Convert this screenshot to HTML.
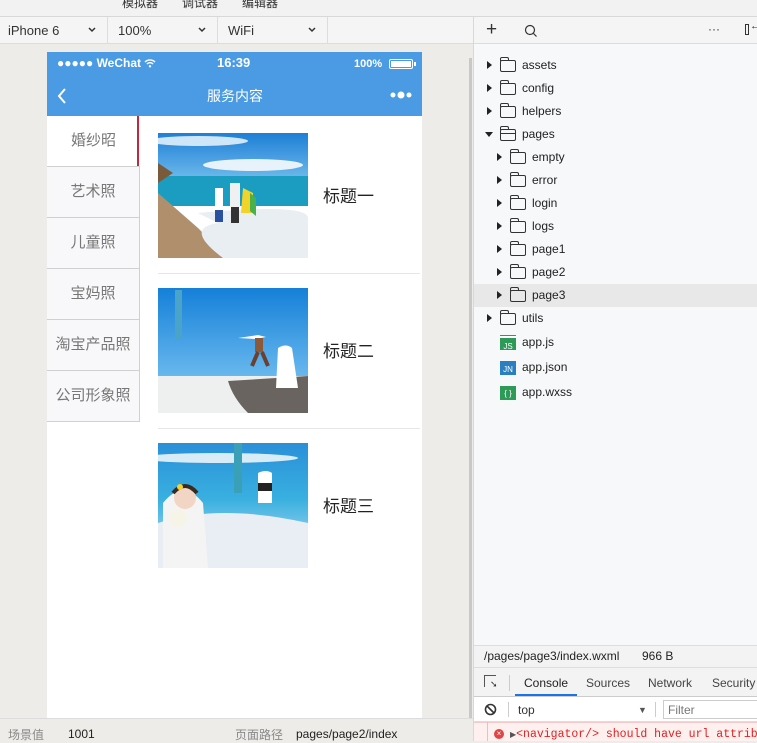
<!DOCTYPE html>
<html><head><meta charset="utf-8"><style>
*{margin:0;padding:0;box-sizing:border-box}
body{width:757px;height:741px;overflow:hidden;background:#eeece9;font-family:"Liberation Sans","Noto Sans CJK SC",sans-serif;position:relative;font-size:12px;color:#333}
.abs{position:absolute}
.cj{font-family:"Liberation Sans","Noto Sans CJK SC",sans-serif}
.tri{width:0;height:0;border-top:4px solid transparent;border-bottom:4px solid transparent;border-left:5px solid #222;position:absolute}
.trid{width:0;height:0;border-left:4px solid transparent;border-right:4px solid transparent;border-top:5px solid #222;position:absolute}
.fold{position:absolute;width:16px;height:12px;border:1.2px solid #333;border-radius:2px}
.fold:before{content:"";position:absolute;left:-1px;top:-4px;width:7px;height:3px;border:1.2px solid #333;border-bottom:none;border-radius:2px 2px 0 0}
.ft{position:absolute;font-size:12px;color:#222}
.side{position:absolute;left:47px;width:93px;height:51px;background:#f8f7f9;border-bottom:1px solid #d0d0d0;border-right:1px solid #d0d0d0;font-size:15px;color:#777;text-align:center;line-height:50px}
</style></head><body>
<div class="abs" style="left:0;top:0;width:757px;height:17px;background:#f2f2f2;border-bottom:1px solid #d8d8d8"></div>
<div class="abs cj" style="left:122px;top:-6px;font-size:12px;color:#333">模拟器</div>
<div class="abs cj" style="left:182px;top:-6px;font-size:12px;color:#333">调试器</div>
<div class="abs cj" style="left:242px;top:-6px;font-size:12px;color:#333">编辑器</div>
<div class="abs" style="left:0;top:17px;width:473px;height:27px;background:#f5f5f5;border-bottom:1px solid #dcdcdc"></div>
<div class="abs" style="left:107px;top:17px;width:1px;height:27px;background:#ddd"></div>
<div class="abs" style="left:217px;top:17px;width:1px;height:27px;background:#ddd"></div>
<div class="abs" style="left:327px;top:17px;width:1px;height:27px;background:#ddd"></div>
<div class="abs" style="left:8px;top:23px;font-size:13px">iPhone 6</div>
<div class="abs" style="left:118px;top:23px;font-size:13px">100%</div>
<div class="abs" style="left:228px;top:23px;font-size:13px">WiFi</div>
<svg class="abs" style="left:88px;top:27px" width="8" height="6"><path d="M1 1l3 3 3-3" stroke="#333" stroke-width="1.5" fill="none"/></svg>
<svg class="abs" style="left:198px;top:27px" width="8" height="6"><path d="M1 1l3 3 3-3" stroke="#333" stroke-width="1.5" fill="none"/></svg>
<svg class="abs" style="left:308px;top:27px" width="8" height="6"><path d="M1 1l3 3 3-3" stroke="#333" stroke-width="1.5" fill="none"/></svg>
<div class="abs" style="left:473px;top:17px;width:1px;height:724px;background:#d8d8d8"></div>
<div class="abs" style="left:469px;top:58px;width:3px;height:660px;background:#c8c8c8"></div>
<div class="abs" style="left:47px;top:52px;width:375px;height:666px;background:#fff"></div>
<div class="abs" style="left:47px;top:52px;width:375px;height:64px;background:#4a9be3"></div>
<div class="abs" style="left:57px;top:56px;color:#fff;font-size:12px;font-weight:bold">●●●●● WeChat</div>
<svg class="abs" style="left:144px;top:58px" width="12" height="10"><path d="M1 4a7 7 0 0110 0M3 6a4 4 0 016 0" stroke="#fff" stroke-width="1.4" fill="none"/><circle cx="6" cy="8.3" r="1.2" fill="#fff"/></svg>
<div class="abs" style="left:217px;top:55px;color:#fff;font-size:13px;font-weight:bold">16:39</div>
<div class="abs" style="left:354px;top:58px;color:#fff;font-size:11px;font-weight:bold">100%</div>
<div class="abs" style="left:389px;top:59px;width:24px;height:10px;border:1.3px solid #fff;border-radius:2px;padding:1px"><div style="width:100%;height:100%;background:#fff"></div></div>
<div class="abs" style="left:414px;top:62px;width:2px;height:4px;background:#fff"></div>
<svg class="abs" style="left:57px;top:87px" width="10" height="18"><path d="M8 2L2 9l6 7" stroke="#fff" stroke-width="2" fill="none"/></svg>
<div class="abs cj" style="left:207px;top:86px;color:#fff;font-size:14px">服务内容</div>
<svg class="abs" style="left:389px;top:90px" width="24" height="10"><circle cx="4" cy="5" r="2.5" fill="#fff"/><circle cx="12" cy="5" r="3.5" fill="#fff"/><circle cx="20" cy="5" r="2.5" fill="#fff"/></svg>
<div class="side cj" style="top:116px;background:#fff;border-right:none">婚纱昭</div>
<div class="abs" style="left:137px;top:116px;width:2px;height:50px;background:#c4283a"></div>
<div class="side cj" style="top:167px">艺术照</div>
<div class="side cj" style="top:218px">儿童照</div>
<div class="side cj" style="top:269px">宝妈照</div>
<div class="side cj" style="top:320px">淘宝产品照</div>
<div class="side cj" style="top:371px">公司形象照</div>
<svg class="abs" style="left:158px;top:133px" width="150" height="125">
<defs><linearGradient id="s1" x1="0" y1="0" x2="0" y2="1"><stop offset="0" stop-color="#1e7fd6"/><stop offset="1" stop-color="#6cb8ea"/></linearGradient></defs>
<rect width="150" height="45" fill="url(#s1)"/><ellipse cx="95" cy="32" rx="50" ry="6" fill="#e8f2fb"/><ellipse cx="40" cy="8" rx="50" ry="5" fill="#cfe6f8"/>
<rect y="43" width="150" height="30" fill="#1a9dc0"/><path d="M0 60 L0 125 L70 125 L40 95 Z" fill="#b0906c"/><path d="M40 80 Q150 70 150 85 L150 125 L65 125 Q25 95 60 90Z" fill="#e9eef3"/><path d="M0 30 L15 40 L0 50Z" fill="#7a5a3a"/>
<rect x="57" y="55" width="8" height="22" fill="#fff"/><rect x="57" y="77" width="8" height="12" fill="#2a50a0"/><rect x="72" y="50" width="10" height="24" fill="#f0f0f0"/><rect x="73" y="74" width="8" height="16" fill="#333"/><path d="M85 55 l10 5 l0 20 l-12 0z" fill="#f2d32a"/><path d="M92 60 l6 5 l0 18 l-6 -5z" fill="#49b04a"/>
</svg>
<div class="abs" style="left:158px;top:273px;width:262px;height:1px;background:#e6e6e6"></div>
<svg class="abs" style="left:158px;top:288px" width="150" height="125">
<defs><linearGradient id="s2" x1="0" y1="0" x2="0" y2="1"><stop offset="0" stop-color="#1580d8"/><stop offset="1" stop-color="#6ab9ee"/></linearGradient></defs>
<rect width="150" height="90" fill="url(#s2)"/><rect x="17" y="2" width="7" height="50" fill="#4aa3c8"/>
<rect y="88" width="150" height="37" fill="#eef0f0"/><path d="M70 93 L150 88 L150 125 L90 125 Q75 110 70 93Z" fill="#6a6460"/>
<path d="M80 50 l20 -3 l8 2 l-10 2z" fill="#fff"/><rect x="97" y="50" width="8" height="14" fill="#8a5a3a"/><path d="M100 64 l-6 14 M104 64 l6 14" stroke="#6a4030" stroke-width="4"/>
<path d="M120 60 q8 -5 14 0 l6 40 l-22 0z" fill="#fff"/>
</svg>
<div class="abs" style="left:158px;top:428px;width:262px;height:1px;background:#e6e6e6"></div>
<svg class="abs" style="left:158px;top:443px" width="150" height="125">
<defs><linearGradient id="s3" x1="0" y1="0" x2="0" y2="1"><stop offset="0" stop-color="#2a8fd8"/><stop offset="0.45" stop-color="#39b0e0"/><stop offset="1" stop-color="#cfe6f3"/></linearGradient></defs>
<rect width="150" height="125" fill="url(#s3)"/><ellipse cx="60" cy="15" rx="80" ry="5" fill="#d8ecf8"/><rect x="76" y="0" width="8" height="50" fill="#3aa0b8"/>
<path d="M0 80 Q60 60 150 80 L150 125 L0 125Z" fill="#e8eef4"/>
<path d="M5 125 L5 60 Q25 35 45 60 L50 125Z" fill="#f4f4f4"/><circle cx="27" cy="55" r="11" fill="#f2d5c4"/><path d="M15 50 q12 -14 24 0" stroke="#3a2a20" stroke-width="4" fill="none"/><circle cx="22" cy="44" r="3" fill="#f5d22a"/>
<circle cx="20" cy="75" r="9" fill="#f6f4e6"/><path d="M100 30 q8 -4 14 0 l0 30 l-14 0z" fill="#fff"/><rect x="100" y="40" width="14" height="8" fill="#222"/>
</svg>
<div class="abs cj" style="left:323px;top:182px;font-size:17px;color:#222">标题一</div>
<div class="abs cj" style="left:323px;top:337px;font-size:17px;color:#222">标题二</div>
<div class="abs cj" style="left:323px;top:492px;font-size:17px;color:#222">标题三</div>
<div class="abs" style="left:0;top:718px;width:473px;height:23px;background:#eeece9;border-top:1px solid #dcdcdc"></div>
<div class="abs cj" style="left:8px;top:726px;font-size:12px;color:#888">场景值</div>
<div class="abs" style="left:68px;top:727px;font-size:12px;color:#222">1001</div>
<div class="abs cj" style="left:235px;top:726px;font-size:12px;color:#888">页面路径</div>
<div class="abs" style="left:296px;top:727px;font-size:12px;color:#222">pages/page2/index</div>
<div class="abs" style="left:474px;top:17px;width:283px;height:628px;background:#f7f8fa"></div>
<div class="abs" style="left:474px;top:17px;width:283px;height:27px;background:#f5f5f5;border-bottom:1px solid #dcdcdc"></div>
<div class="abs" style="left:486px;top:19px;font-size:19px;color:#333;font-weight:300">+</div>
<svg class="abs" style="left:524px;top:24px" width="14" height="14"><circle cx="6" cy="6" r="4.5" stroke="#333" stroke-width="1.2" fill="none"/><path d="M9.5 9.5l3 3" stroke="#333" stroke-width="1.2"/></svg>
<div class="abs" style="left:708px;top:22px;font-size:12px;color:#333">···</div>
<div class="abs" style="left:745px;top:24px;width:4px;height:11px;border:1.2px solid #333"></div>
<div class="abs" style="left:750px;top:20px;font-size:11px">←</div>
<div class="abs" style="left:474px;top:284px;width:283px;height:23px;background:#e8e8e8"></div>
<div class="tri" style="left:487px;top:61px"></div><div class="fold" style="left:500px;top:60px"></div><div class="ft" style="left:522px;top:58px">assets</div>
<div class="tri" style="left:487px;top:84px"></div><div class="fold" style="left:500px;top:83px"></div><div class="ft" style="left:522px;top:81px">config</div>
<div class="tri" style="left:487px;top:107px"></div><div class="fold" style="left:500px;top:106px"></div><div class="ft" style="left:522px;top:104px">helpers</div>
<div class="trid" style="left:485px;top:132px"></div><div class="fold" style="left:500px;top:129px"></div><div class="abs" style="left:501px;top:133px;width:14px;height:1px;background:#333"></div><div class="ft" style="left:522px;top:127px">pages</div>
<div class="tri" style="left:497px;top:153px"></div><div class="fold" style="left:510px;top:152px"></div><div class="ft" style="left:532px;top:150px">empty</div>
<div class="tri" style="left:497px;top:176px"></div><div class="fold" style="left:510px;top:175px"></div><div class="ft" style="left:532px;top:173px">error</div>
<div class="tri" style="left:497px;top:199px"></div><div class="fold" style="left:510px;top:198px"></div><div class="ft" style="left:532px;top:196px">login</div>
<div class="tri" style="left:497px;top:222px"></div><div class="fold" style="left:510px;top:221px"></div><div class="ft" style="left:532px;top:219px">logs</div>
<div class="tri" style="left:497px;top:245px"></div><div class="fold" style="left:510px;top:244px"></div><div class="ft" style="left:532px;top:242px">page1</div>
<div class="tri" style="left:497px;top:268px"></div><div class="fold" style="left:510px;top:267px"></div><div class="ft" style="left:532px;top:265px">page2</div>
<div class="tri" style="left:497px;top:291px"></div><div class="fold" style="left:510px;top:290px"></div><div class="ft" style="left:532px;top:288px">page3</div>
<div class="tri" style="left:487px;top:314px"></div><div class="fold" style="left:500px;top:313px"></div><div class="ft" style="left:522px;top:311px">utils</div>
<div class="abs" style="left:500px;top:336px;width:16px;height:14px;background:#2e9a58;color:#fff;font-size:8px;text-align:center;line-height:17px;border-top:2px solid #fff;box-shadow:0 -1px 0 #2e9a58">JS</div><div class="ft" style="left:522px;top:335px">app.js</div>
<div class="abs" style="left:500px;top:361px;width:16px;height:14px;background:#2a7fc0;color:#fff;font-size:8px;text-align:center;line-height:17px">JN</div><div class="ft" style="left:522px;top:360px">app.json</div>
<div class="abs" style="left:500px;top:386px;width:16px;height:14px;background:#2e9a58;color:#fff;font-size:8px;text-align:center;line-height:15px">{ }</div><div class="ft" style="left:522px;top:385px">app.wxss</div>
<div class="abs" style="left:474px;top:645px;width:283px;height:23px;background:#f3f3f3;border-top:1px solid #ddd;border-bottom:1px solid #ddd"></div>
<div class="abs" style="left:484px;top:649px;font-size:12px;color:#222">/pages/page3/index.wxml</div>
<div class="abs" style="left:642px;top:649px;font-size:12px;color:#222">966 B</div>
<div class="abs" style="left:474px;top:668px;width:283px;height:29px;background:#f3f3f3;border-bottom:1px solid #ccc"></div>
<div class="abs" style="left:484px;top:675px;width:12px;height:12px;border:1px solid #555;border-right:none;border-bottom:none"></div>
<div class="abs" style="left:490px;top:679px;font-size:9px;color:#333">➘</div>
<div class="abs" style="left:509px;top:675px;width:1px;height:16px;background:#ccc"></div>
<div class="abs" style="left:524px;top:676px;font-size:12px;color:#222">Console</div>
<div class="abs" style="left:515px;top:694px;width:62px;height:2px;background:#1a73e8"></div>
<div class="abs" style="left:586px;top:676px;font-size:12px;color:#444">Sources</div>
<div class="abs" style="left:648px;top:676px;font-size:12px;color:#444">Network</div>
<div class="abs" style="left:712px;top:676px;font-size:12px;color:#444">Security</div>
<div class="abs" style="left:474px;top:697px;width:283px;height:25px;background:#fff;border-bottom:1px solid #ddd"></div>
<svg class="abs" style="left:484px;top:703px" width="13" height="13"><circle cx="6.5" cy="6.5" r="5" stroke="#333" stroke-width="1.6" fill="none"/><path d="M3 3l7 7" stroke="#333" stroke-width="1.6"/></svg>
<div class="abs" style="left:508px;top:702px;width:1px;height:15px;background:#ccc"></div>
<div class="abs" style="left:518px;top:703px;font-size:12px;color:#333">top</div>
<div class="abs" style="left:638px;top:705px;font-size:9px;color:#555">▼</div>
<div class="abs" style="left:655px;top:702px;width:1px;height:15px;background:#ccc"></div>
<div class="abs" style="left:663px;top:700px;width:100px;height:19px;border:1px solid #ccc"></div>
<div class="abs" style="left:668px;top:703px;font-size:12px;color:#777">Filter</div>
<div class="abs" style="left:474px;top:722px;width:283px;height:19px;background:#fff0f0;border-top:1px solid #f5caca"></div>
<div class="abs" style="left:487px;top:722px;width:1px;height:19px;background:#ccc"></div>
<div class="abs" style="left:494px;top:729px;width:10px;height:10px;border-radius:50%;background:#e04444;color:#fff;font-size:8px;line-height:10px;text-align:center">×</div>
<div class="abs" style="left:510px;top:728px;font-family:'Liberation Mono',monospace;font-size:11.5px;color:#e02020;white-space:nowrap"><span style="color:#555;font-size:8px">▶</span>&lt;navigator/&gt; should have url attribu</div>
</body></html>
